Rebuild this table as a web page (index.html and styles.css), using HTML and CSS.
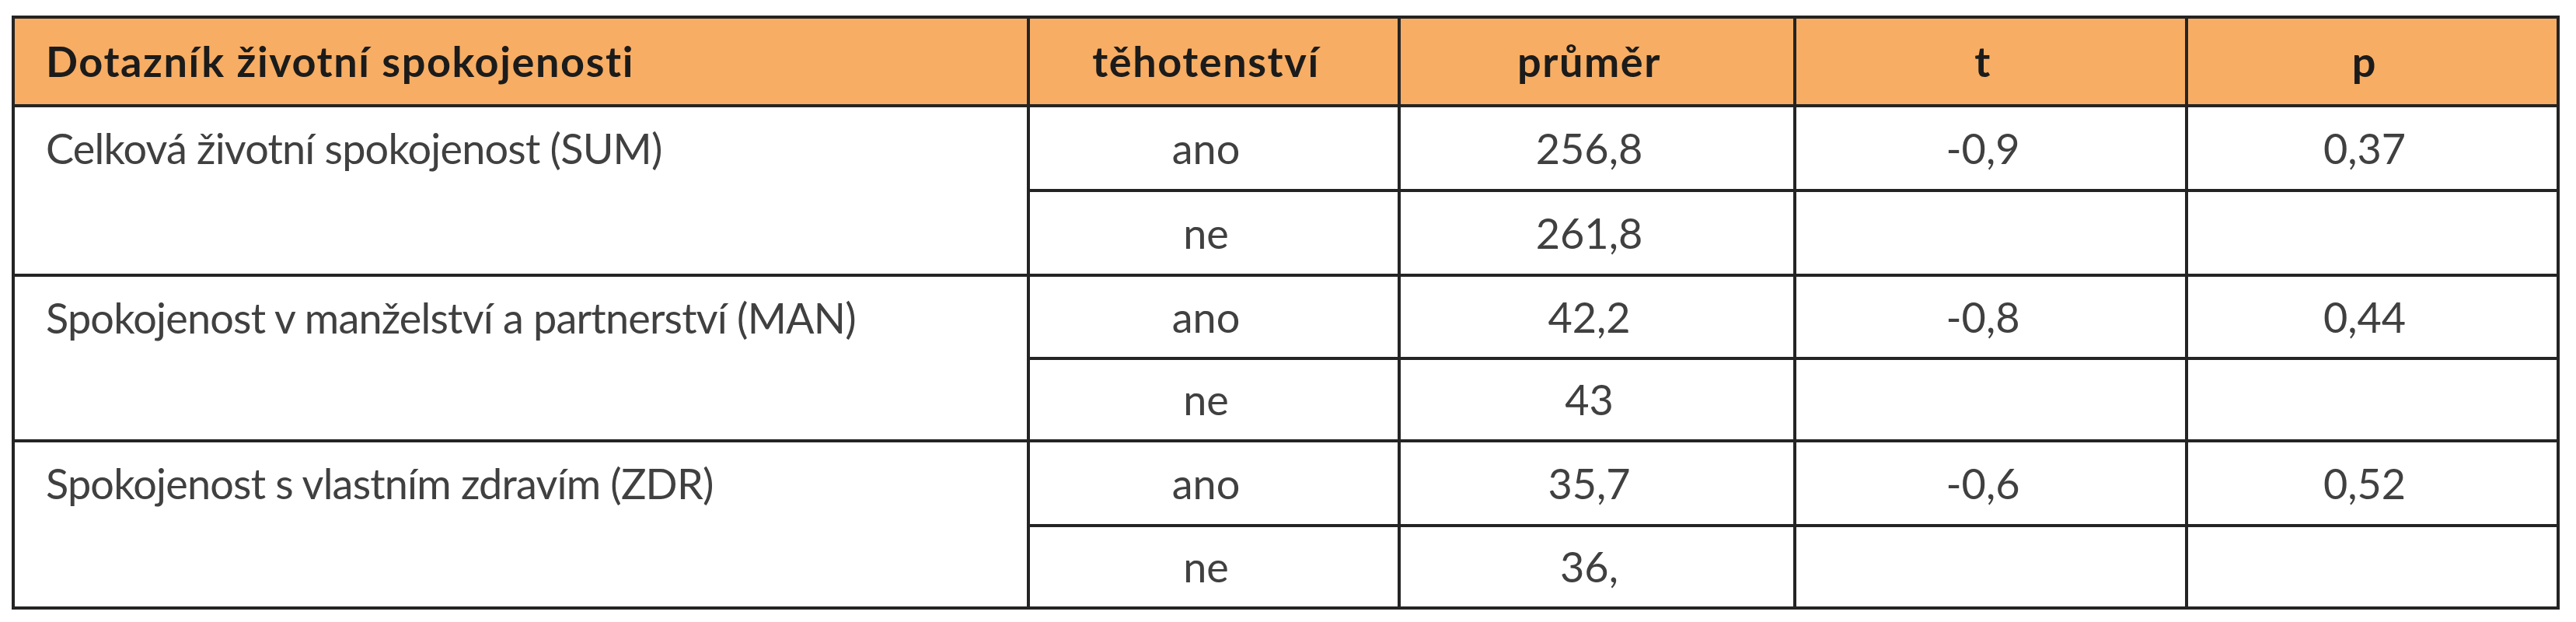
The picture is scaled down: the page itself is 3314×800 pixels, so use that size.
FILE: index.html
```html
<!DOCTYPE html>
<html lang="cs">
<head>
<meta charset="utf-8">
<title>Dotazník životní spokojenosti</title>
<link rel="stylesheet" href="styles.css">
</head>
<body>
<table class="stats">
  <colgroup>
    <col class="c-label">
    <col class="c-preg">
    <col class="c-mean">
    <col class="c-t">
    <col class="c-p">
  </colgroup>
  <thead>
    <tr class="head">
      <th class="label">Dotazník životní spokojenosti</th>
      <th>těhotenství</th>
      <th>průměr</th>
      <th>t</th>
      <th>p</th>
    </tr>
  </thead>
  <tbody>
    <tr class="row-a1">
      <td class="label" rowspan="2">Celková životní spokojenost (SUM)</td>
      <td>ano</td>
      <td>256,8</td>
      <td>-0,9</td>
      <td>0,37</td>
    </tr>
    <tr class="row-b1">
      <td>ne</td>
      <td>261,8</td>
      <td></td>
      <td></td>
    </tr>
    <tr class="row-a2">
      <td class="label" rowspan="2">Spokojenost v manželství a partnerství (MAN)</td>
      <td>ano</td>
      <td>42,2</td>
      <td>-0,8</td>
      <td>0,44</td>
    </tr>
    <tr class="row-b2">
      <td>ne</td>
      <td>43</td>
      <td></td>
      <td></td>
    </tr>
    <tr class="row-a3">
      <td class="label" rowspan="2">Spokojenost s vlastním zdravím (ZDR)</td>
      <td>ano</td>
      <td>35,7</td>
      <td>-0,6</td>
      <td>0,52</td>
    </tr>
    <tr class="row-b3">
      <td>ne</td>
      <td>36,</td>
      <td></td>
      <td></td>
    </tr>
  </tbody>
</table>
</body>
</html>
```
FILE: styles.css
```css
html, body {
  margin: 0;
  padding: 0;
  background: #ffffff;
}

body {
  font-family: Lato, "Liberation Sans", Arial, sans-serif;
}

.stats {
  border-collapse: collapse;
  table-layout: fixed;
  width: 3274px;
  margin: 20px 0 0 15px;
  color: #404040;
  font-size: 54px;
  line-height: 1;
}

.c-label { width: 1306px; }
.c-preg  { width: 477px; }
.c-mean  { width: 509px; }
.c-t     { width: 504px; }
.c-p     { width: 478px; }

.stats th,
.stats td {
  border: 4px solid #242424;
  padding: 0 20px 0 0;
  text-align: center;
  vertical-align: middle;
  font-weight: 400;
}

.stats thead th {
  background: #f7ad63;
  color: #1b1b1b;
  font-weight: 700;
  letter-spacing: 1.6px;
}

.stats .label {
  text-align: left;
  padding: 0 0 0 40px;
}

.stats tbody .label {
  vertical-align: top;
  line-height: 105px;
  letter-spacing: -0.8px;
}

.head   { height: 114px; }
.row-a1 { height: 109px; }
.row-b1 { height: 109px; }
.row-a2 { height: 107px; }
.row-b2 { height: 106px; }
.row-a3 { height: 109px; }
.row-b3 { height: 106px; }
```
